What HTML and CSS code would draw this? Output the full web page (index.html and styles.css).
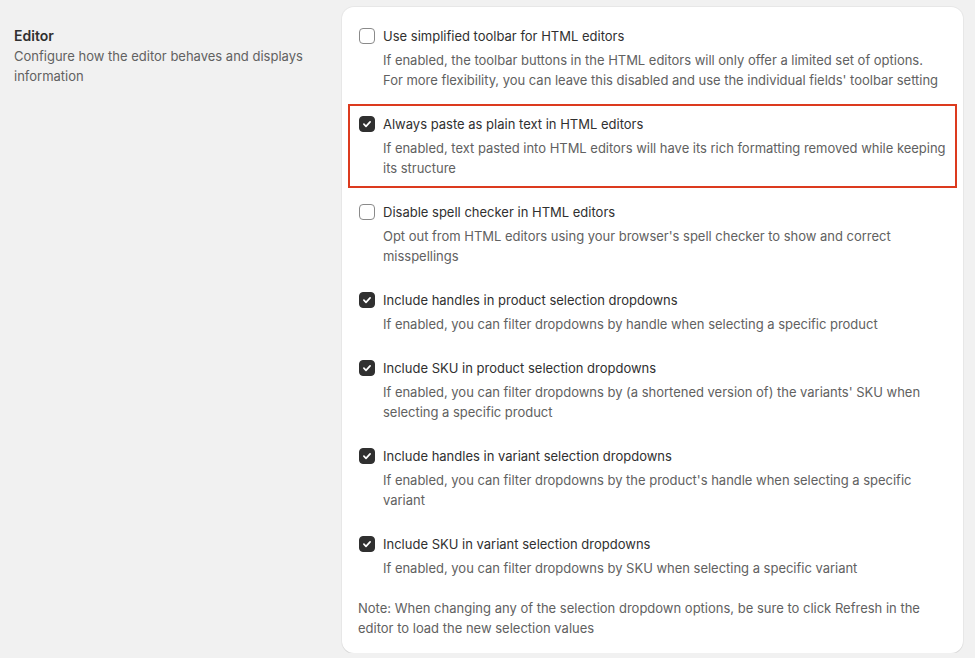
FILE: index.html
```html
<!DOCTYPE html>
<html lang="en">
<head>
<meta charset="utf-8">
<title>Editor settings</title>
<link rel="stylesheet" href="styles.css">
</head>
<body>
<div class="page">
  <section class="intro">
    <h2 class="intro-title">Editor</h2>
    <p class="intro-desc">Configure how the editor behaves and displays information</p>
  </section>
  <section class="card">
    <div class="options">
      <div class="option">
        <span class="box"></span>
        <div class="text">
          <div class="label">Use simplified toolbar for HTML editors</div>
          <div class="desc">If enabled, the toolbar buttons in the HTML editors will only offer a limited set of options.<br>For more flexibility, you can leave this disabled and use the individual fields' toolbar setting</div>
        </div>
      </div>
      <div class="option highlighted">
        <span class="box checked"><svg viewBox="0 0 16 16" width="16" height="16"><path d="M4.9 8.2l2.1 2.1 4.1-4.4" fill="none" stroke="#fff" stroke-width="1.7" stroke-linecap="round" stroke-linejoin="round"/></svg></span>
        <div class="text">
          <div class="label">Always paste as plain text in HTML editors</div>
          <div class="desc">If enabled, text pasted into HTML editors will have its rich formatting removed while keeping its structure</div>
        </div>
      </div>
      <div class="option">
        <span class="box"></span>
        <div class="text">
          <div class="label">Disable spell checker in HTML editors</div>
          <div class="desc">Opt out from HTML editors using your browser's spell checker to show and correct misspellings</div>
        </div>
      </div>
      <div class="option">
        <span class="box checked"><svg viewBox="0 0 16 16" width="16" height="16"><path d="M4.9 8.2l2.1 2.1 4.1-4.4" fill="none" stroke="#fff" stroke-width="1.7" stroke-linecap="round" stroke-linejoin="round"/></svg></span>
        <div class="text">
          <div class="label">Include handles in product selection dropdowns</div>
          <div class="desc">If enabled, you can filter dropdowns by handle when selecting a specific product</div>
        </div>
      </div>
      <div class="option">
        <span class="box checked"><svg viewBox="0 0 16 16" width="16" height="16"><path d="M4.9 8.2l2.1 2.1 4.1-4.4" fill="none" stroke="#fff" stroke-width="1.7" stroke-linecap="round" stroke-linejoin="round"/></svg></span>
        <div class="text">
          <div class="label">Include SKU in product selection dropdowns</div>
          <div class="desc">If enabled, you can filter dropdowns by (a shortened version of) the variants' SKU when selecting a specific product</div>
        </div>
      </div>
      <div class="option">
        <span class="box checked"><svg viewBox="0 0 16 16" width="16" height="16"><path d="M4.9 8.2l2.1 2.1 4.1-4.4" fill="none" stroke="#fff" stroke-width="1.7" stroke-linecap="round" stroke-linejoin="round"/></svg></span>
        <div class="text">
          <div class="label">Include handles in variant selection dropdowns</div>
          <div class="desc">If enabled, you can filter dropdowns by the product's handle when selecting a specific variant</div>
        </div>
      </div>
      <div class="option">
        <span class="box checked"><svg viewBox="0 0 16 16" width="16" height="16"><path d="M4.9 8.2l2.1 2.1 4.1-4.4" fill="none" stroke="#fff" stroke-width="1.7" stroke-linecap="round" stroke-linejoin="round"/></svg></span>
        <div class="text">
          <div class="label">Include SKU in variant selection dropdowns</div>
          <div class="desc">If enabled, you can filter dropdowns by SKU when selecting a specific variant</div>
        </div>
      </div>
    </div>
    <p class="note">Note: When changing any of the selection dropdown options, be sure to click Refresh in the editor to load the new selection values</p>
  </section>
</div>
</body>
</html>
```

FILE: styles.css
```css
html, body {
  margin: 0;
  padding: 0;
  background: #f1f1f1;
}
body {
  font-family: Inter, "Noto Sans", "Liberation Sans", sans-serif;
  font-size: 13px;
  line-height: 20px;
  color: #303030;
}
.page {
  display: grid;
  grid-template-columns: 342px 621px;
  padding-top: 7px;
}
.intro {
  padding: 19px 0 0 14px;
}
.intro-title {
  margin: 0;
  font-size: 14px;
  line-height: 20px;
  font-weight: 600;
  color: #303030;
}
.intro-desc {
  margin: 0;
  color: #616161;
  width: 300px;
}
.card {
  background: #fff;
  border-radius: 12px;
  box-shadow: 0 1px 0 rgba(26,26,26,0.07), 0 0 0 1px rgba(0,0,0,0.04);
  padding: 19px 16px 15px 16px;
  height: 612px;
}
.options {
  display: flex;
  flex-direction: column;
  gap: 24px;
}
.option {
  display: flex;
  gap: 8px;
  align-items: flex-start;
}
.option.highlighted {
  outline: 2px solid #dc3a1e;
  outline-offset: 8px;
}
.box {
  flex: none;
  width: 16px;
  height: 16px;
  margin: 2px 0 0 1px;
  box-sizing: border-box;
  border: 1px solid #8a8a8a;
  border-radius: 4px;
  background: #fff;
  display: flex;
}
.box.checked {
  background: #303030;
  border-color: #303030;
}
.box svg {
  margin: -1px;
  display: block;
}
.text {
  flex: 1;
  min-width: 0;
  margin-right: -4px;
}
.label {
  color: #303030;
}
.desc {
  margin-top: 4px;
  color: #616161;
  letter-spacing: -0.02px;
}
.note {
  margin: 20px 0 0 0;
  color: #616161;
}
```
